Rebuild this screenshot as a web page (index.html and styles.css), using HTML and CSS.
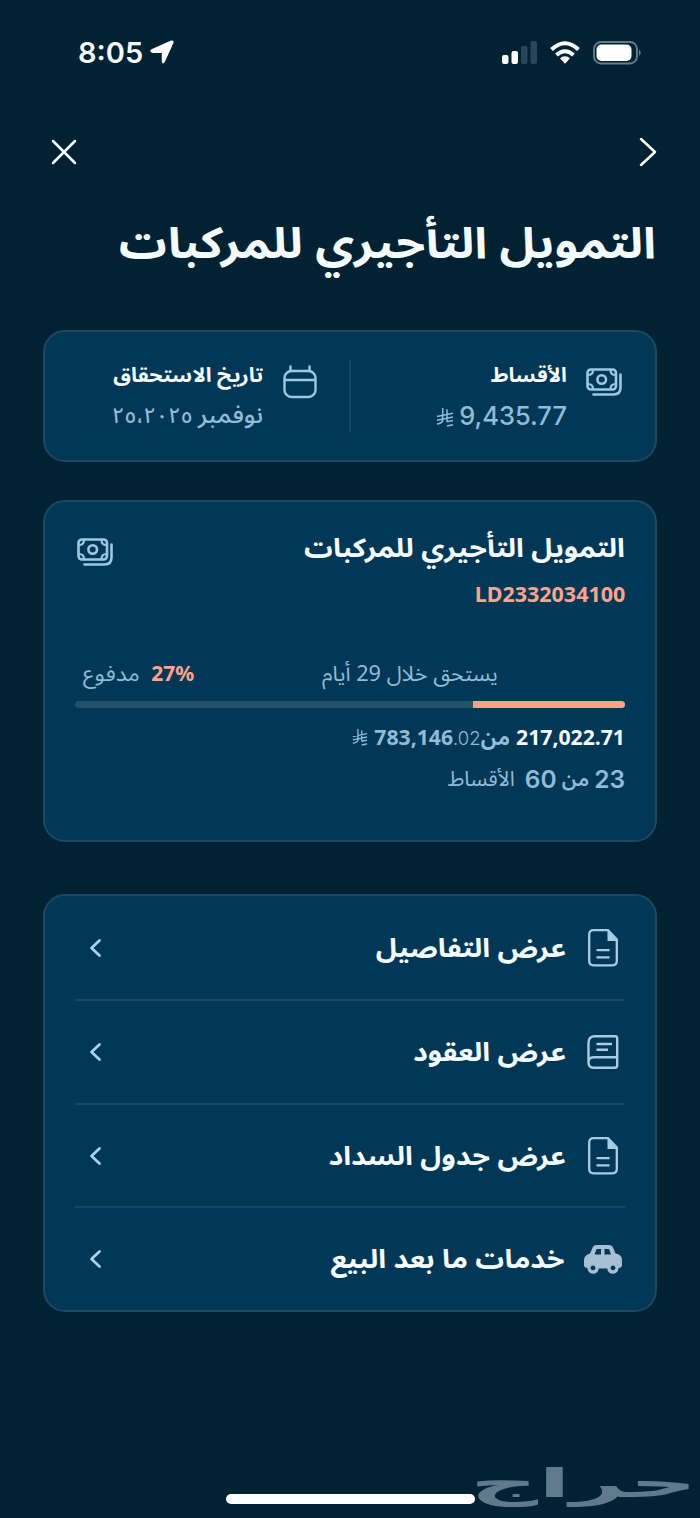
FILE: index.html
```html
<!DOCTYPE html>
<html lang="ar" dir="rtl">
<head>
<meta charset="utf-8">
<title>التمويل التأجيري للمركبات</title>
<link rel="stylesheet" href="styles.css">
</head>
<body>
<svg class="defs" width="0" height="0" aria-hidden="true">
  <symbol id="cash" viewBox="0 0 38 30">
    <g fill="none" stroke="currentColor" stroke-width="2.6" stroke-linecap="round">
      <rect x="2.500" y="2.500" width="28.500" height="20" rx="3.5"/>
      <circle cx="16.7" cy="12.5" r="4.3"/>
      <path d="M3 8Q8 8 8 3M25.5 3Q25.500 8 30.5 8M3 17Q8 17 8 22M25.5 22Q25.5 17 30.5 17" stroke-width="2.200"/>
      <path d="M35.5 7.500V20.5Q35.500 27.500 28.500 27.5H8.500"/>
    </g>
  </symbol>
  <symbol id="riyal" viewBox="0 0 18 20">
    <g fill="none" stroke="currentColor" stroke-width="1.5">
      <path d="M6.700 1V13.500Q6.200 16 1 17M11 2.300V15M1 9.500L17 6.200M1 13.200L17 10M11 19L17 17.700M11 14.800L17 13.600"/>
    </g>
  </symbol>
  <symbol id="doc" viewBox="0 0 32 40">
    <path d="M21 2.2H6.5Q2.2 2.2 2.2 6.5V33Q2.2 37.3 6.5 37.3H25.5Q29.8 37.3 29.8 33V11.5Z" fill="none" stroke="currentColor" stroke-width="2.3"/>
    <path d="M20.5 2V13H30Z" fill="currentColor"/>
    <path d="M9.5 22.2H22.5M9.5 29.3H22.5" stroke="currentColor" stroke-width="2.3"/>
  </symbol>
  <symbol id="book" viewBox="0 0 34 36">
    <g fill="none" stroke="currentColor" stroke-width="2.4" stroke-linejoin="round">
      <path d="M2.500 28.5V9Q2.500 2.300 9 2.300H29Q31.200 2.300 31.200 4.500V31.500Q31.200 33.700 29 33.700H7.5Q2.500 33.700 2.500 28.5Q2.500 23.300 7.5 23.300H31.2"/>
      <path d="M10.5 10H26M10.5 15.8H22"/>
    </g>
  </symbol>
  <symbol id="car" viewBox="0 0 40 30">
    <path fill="currentColor" fill-rule="evenodd" d="M13 1H26.500Q29 1 30 3.5L32.500 9.5Q39 10.5 39 16V21Q39 24 35.500 24A5.600 5.600 0 0 1 24.300 24.500H15.700A5.600 5.600 0 0 1 4.500 24Q1 24 1 21V16Q1 11 7 9.500L9.600 3.500Q10.500 1 13 1ZM13.700 5L11.500 10.500H18V5ZM21.500 5V10.500H28L26 5ZM10 21.500A2.400 2.400 0 1 0 10.01 21.500ZM30 21.500A2.400 2.400 0 1 0 30.010 21.500Z"/>
  </symbol>
  <symbol id="chev" viewBox="0 0 14 20">
    <path d="M10.500 2.500L2.500 10L10.500 17.500" fill="none" stroke="currentColor" stroke-width="2.700" stroke-linecap="round" stroke-linejoin="round"/>
  </symbol>
</svg>

<main class="screen">
  <div class="status" dir="ltr">
    <div class="clock">
      <span>8:05</span>
      <svg width="26" height="26" viewBox="0 0 26 26"><path d="M2.500 10.200L21.500 1.700Q25.300 .6 24.300 4.200L15.800 23Q13.500 26 12.800 22.500V14H3.500Q-.5 12.500 2.500 10.200Z" fill="#fff"/></svg>
    </div>
    <div class="signals">
      <svg width="36" height="24" viewBox="0 0 36 24"><rect x="0" y="14" width="6.500" height="9" rx="2" fill="#fff"/><rect x="9.500" y="10" width="6.500" height="13" rx="2" fill="#fff"/><rect x="19" y="5" width="6.500" height="18" rx="2" fill="#29465a"/><rect x="28.500" y="0" width="6.500" height="23" rx="2" fill="#29465a"/></svg>
      <svg width="30" height="24" viewBox="0 0 30 24"><g fill="none" stroke="#fff" stroke-width="4"><path d="M1.500 8.500Q15-4 28.500 8.500"/><path d="M6.500 14Q15 6.500 23.500 14"/></g><path d="M10 17.200Q15 13.500 20 17.200L15 22.800Z" fill="#fff"/></svg>
      <svg class="battery" width="50" height="24" viewBox="0 0 50 24"><rect x="1" y="1" width="43" height="21.500" rx="7" fill="none" stroke="#657d8b" stroke-width="1.900"/><rect x="3.500" y="3.500" width="35" height="16.500" rx="5" fill="#fff"/><path d="M46 8.500Q49.500 11.800 46 15Z" fill="#657d8b"/></svg>
    </div>
  </div>

  <nav class="nav">
    <svg width="20" height="30" viewBox="0 0 20 30"><path d="M3 2L17 15L3 28" fill="none" stroke="#fff" stroke-width="2.500" stroke-linecap="round" stroke-linejoin="round"/></svg>
    <svg class="close" width="28" height="28" viewBox="0 0 28 28"><path d="M3 3L25 25M25 3L3 25" stroke="#fff" stroke-width="2.500" stroke-linecap="round"/></svg>
  </nav>

  <h1 class="title"><span class="t t-title">التمويل التأجيري للمركبات</span></h1>

  <section class="card summary">
    <div class="fact">
      <svg class="icon cash"><use href="#cash"/></svg>
      <div class="fact-text">
        <div class="fact-name"><span class="t t-inst">الأقساط</span></div>
        <div class="fact-value amount"><span class="t">9,435.77</span><svg class="riyal"><use href="#riyal"/></svg></div>
      </div>
    </div>
    <div class="fact due">
      <svg class="icon cal" viewBox="0 0 34 34"><g fill="none" stroke="currentColor" stroke-width="2.400" stroke-linecap="round"><rect x="1.500" y="6" width="31" height="26" rx="7"/><path d="M2 15H32M7.500 1.500V6M26.500 1.500V6"/></g></svg>
      <div class="fact-text">
        <div class="fact-name"><span class="t t-due">تاريخ الاستحقاق</span></div>
        <div class="fact-value date"><span class="t t-month">نوفمبر</span><span class="t t-date" dir="ltr">٢٥،٢٠٢٥</span></div>
      </div>
    </div>
  </section>

  <section class="card loan">
    <div class="loan-head">
      <h2><span class="t t-loan">التمويل التأجيري للمركبات</span></h2>
      <svg class="icon cash"><use href="#cash"/></svg>
    </div>
    <div class="ref"><span class="t t-ref">LD2332034100</span></div>
    <div class="labels">
      <span class="t t-days">يستحق خلال 29 أيام</span>
      <span class="paid"><b class="t t-pct" dir="ltr">27%</b><span class="t t-paid">مدفوع</span></span>
    </div>
    <div class="bar"><div class="bar-fill"></div></div>
    <div class="money"><b class="t t-a">217,022.71</b><b class="t t-of">من</b><span class="t total" dir="ltr"><b>783,146</b><span class="cents">.02</span></span><svg class="riyal small"><use href="#riyal"/></svg></div>
    <div class="count"><span class="t">23</span><span class="t t-of2">من</span><span class="t">60</span><span class="t t-lite">الأقساط</span></div>
  </section>

  <section class="card menu">
    <a class="row"><svg class="ico doc"><use href="#doc"/></svg><span class="label"><span class="t">عرض التفاصيل</span></span><svg class="chev"><use href="#chev"/></svg></a>
    <a class="row"><svg class="ico book"><use href="#book"/></svg><span class="label"><span class="t">عرض العقود</span></span><svg class="chev"><use href="#chev"/></svg></a>
    <a class="row"><svg class="ico doc"><use href="#doc"/></svg><span class="label"><span class="t">عرض جدول السداد</span></span><svg class="chev"><use href="#chev"/></svg></a>
    <a class="row"><svg class="ico car"><use href="#car"/></svg><span class="label"><span class="t">خدمات ما بعد البيع</span></span><svg class="chev"><use href="#chev"/></svg></a>
  </section>

  <div class="home"></div>
  <div class="mark">حراج</div>
</main>
</body>
</html>
```
FILE: styles.css
```css
* { box-sizing: border-box; }
body { margin: 0; background: #002233; color: #f5fcff; font-family: "Noto Sans", "Noto Sans Arabic", "DejaVu Sans", sans-serif; }
.defs { position: absolute; }
.screen { position: relative; width: 700px; height: 1518px; overflow: hidden; display: flex; flex-direction: column; }
svg { display: block; flex: none; }
.t { display: inline-block; white-space: nowrap; transform-origin: right center; }

.status { height: 105px; padding: 39px 57px 0 78px; display: flex; justify-content: space-between; align-items: flex-start; }
.clock { display: flex; gap: 6px; font: 600 29px/28px Inter, sans-serif; }
.signals { display: flex; gap: 12px; padding-top: 2px; }
.battery { margin-left: 1px; }
.nav { height: 94px; padding: 32px 42px 0 50px; display: flex; justify-content: space-between; align-items: flex-start; }
.close { margin-top: 1px; }
.title { margin: 0; height: 131px; padding: 8px 44px 0 0; font-size: 43px; line-height: 70px; font-weight: 700; }
.t-title { transform: scaleX(1.110); }

.card { margin: 0 43px; background: #023855; border: 2px solid #1a4961; border-radius: 22px; flex: none; }
.icon { color: #9cc8e2; }
.cash { width: 38px; height: 30px; }

.summary { height: 132px; display: grid; grid-template-columns: 304px 1fr; padding: 28px 0; }
.fact { display: flex; gap: 18px; padding-right: 32px; }
.fact .cash { margin-top: 7px; }
.due { height: 72px; border-right: 2px solid #164762; padding-right: 32px; gap: 20px; }
.cal { width: 34px; height: 34px; margin-top: 5px; }
.fact-name { font-size: 20px; line-height: 30px; font-weight: 700; }
.t-inst { transform: scaleX(1.06); }
.t-due { transform: scaleX(1.07); }
.fact-value { height: 40px; margin-top: 8px; font: 500 25.500px/36px Inter, "Noto Sans", "Noto Sans Arabic", "DejaVu Sans", sans-serif; color: #8ebcd9; }
.amount { display: flex; gap: 5px; align-items: flex-start; }
.riyal { width: 18px; height: 20px; color: #8ebcd9; margin-top: 9px; }
.date { display: flex; gap: 8px; font-size: 21.500px; line-height: 34px; }
.t-month { font-size: 24px; transform: scaleX(1.050); }

.loan { height: 342px; margin-top: 38px; padding: 28px 30px 0; display: flex; flex-direction: column; }
.loan-head { display: flex; justify-content: space-between; height: 46px; }
.loan-head h2 { margin: -2px 0 0; font-size: 26px; line-height: 38px; font-weight: 700; }
.t-loan { transform: scaleX(1.096); }
.loan-head .cash { margin: 7px 0 0 1px; }
.ref { height: 70px; margin-top: -1px; color: #ffa491; font-weight: 700; font-size: 21px; line-height: 38px; }
.t-ref { transform: scaleX(1.022); }
.labels { display: flex; justify-content: space-between; height: 56px; padding: 9px 127px 0 8px; font-size: 21px; line-height: 38px; color: #8ebcd9; }
.t-days { transform: scaleX(1.035); }
.paid { display: flex; gap: 16px; }
.paid b { color: #ffa491; }
.t-paid { transform: scaleX(1.09); transform-origin: left center; }
.bar { height: 7px; border-radius: 3.500px; background: #24526d; overflow: hidden; flex: none; }
.bar-fill { width: 152px; height: 7px; background: #ff9f8c; }
.money { display: flex; height: 40px; margin-top: 9px; font-size: 21.200px; line-height: 40px; color: #8ebcd9; gap: 6px; }
.t-a { color: #f5fcff; }
.total { margin-right: -6px; }
.cents { font-family: Inter, sans-serif; font-weight: 300; font-size: 18.500px; }
.small { width: 16px; height: 18px; margin-top: 11px; }
.count { display: flex; gap: 5px; height: 40px; margin-top: 2px; font: 600 24.500px/40px Inter, "Noto Sans", "Noto Sans Arabic", "DejaVu Sans", sans-serif; color: #8ebcd9; }
.t-of2 { font-size: 20.500px; }
.t-lite { font-size: 21px; font-weight: 400; margin-right: 5px; }

.menu { height: 418px; margin-top: 52px; padding: 0 30px; display: grid; grid-template-rows: 105px 104px 103px 1fr; }
.row { display: flex; align-items: center; border-bottom: 2px solid #184962; }
.row:last-child { border: 0; }
.ico { color: #a8cce5; }
.doc { width: 32px; height: 40px; margin-right: 6px; }
.book { width: 34px; height: 36px; margin-right: 5px; }
.car { width: 40px; height: 30px; margin-right: 2px; color: #a6bfd3; }
.label { flex: 1; padding: 0 21px 2px 0; font-size: 26px; line-height: 38px; font-weight: 700; }
.label .t { transform: scaleX(1.100); }
.book + .label { padding-right: 20px; }
.car + .label { padding-right: 18px; }
.chev { width: 14px; height: 20px; margin-left: 14px; color: #a8d4ee; }

.home { position: absolute; left: 226px; top: 1494px; width: 249px; height: 10px; border-radius: 5px; background: #fff; }
.mark { position: absolute; right: 3px; top: 1460px; font: 700 40px/46px "DejaVu Sans", sans-serif; color: #607a8b; transform: scale(2.360, 1); transform-origin: right center; }
```
